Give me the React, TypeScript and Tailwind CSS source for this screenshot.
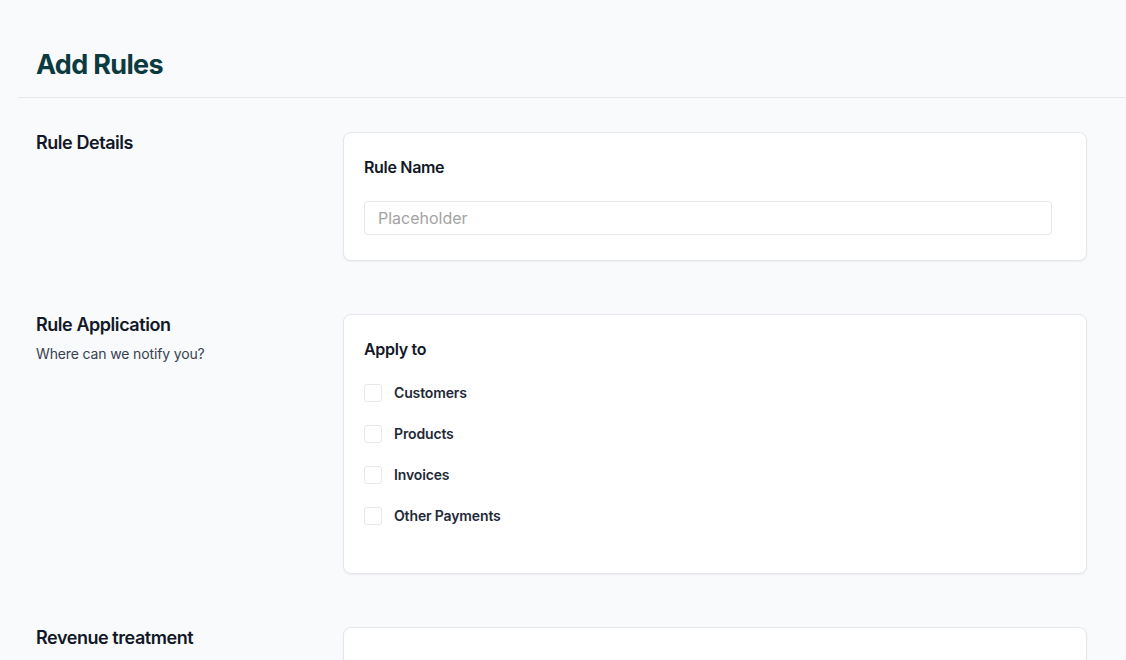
import React from 'react'

const font = { fontFamily: 'Inter, "Noto Sans", sans-serif' }

const targets = ['Customers', 'Products', 'Invoices', 'Other Payments']

function Section({ title, subtitle, children }: { title: string; subtitle?: string; children: React.ReactNode }) {
  return (
    <div className="flex">
      <div className="w-[307px] shrink-0">
        <h2 className="text-[18px] leading-[28px] font-semibold text-[#111827] tracking-[-0.025em]">{title}</h2>
        {subtitle && <p className="mt-[5px] text-[14px] leading-[20px] text-[#374151] tracking-[-0.01em]">{subtitle}</p>}
      </div>
      <div className="mt-[3px] w-[744px] shrink-0 rounded-[8px] border border-[#e5e7eb] bg-white shadow-[0_1px_2px_rgba(0,0,0,0.06)]">
        {children}
      </div>
    </div>
  )
}

export default function App() {
  return (
    <div className="min-h-screen bg-[#f9fafb] overflow-hidden" style={font}>
      <div className="ml-[18px]">
        {/* Header */}
        <header className="border-b border-[#e5e7eb] pl-[18px] pt-[47px] pb-[14px]">
          <h1 className="text-[27px] leading-[36px] font-bold text-[#0b3b40] tracking-[-0.025em]">Add Rules</h1>
        </header>

        <div className="pl-[18px] pt-[31px] flex flex-col gap-[50px]">
          <Section title="Rule Details">
            <div className="pt-[22px] px-[20px] pb-[25px]">
              <label className="block text-[16px] leading-[24px] font-semibold text-[#111827] tracking-[-0.02em]">Rule Name</label>
              <input
                type="text"
                placeholder="Placeholder"
                className="mt-[22px] block h-[34px] w-[688px] rounded-[4px] border border-[#e5e7eb] bg-white px-[13px] text-[16px] text-[#111827] placeholder:text-[#a3a3a3] outline-none"
              />
            </div>
          </Section>

          <Section title="Rule Application" subtitle="Where can we notify you?">
            <div className="pt-[22px] px-[20px] pb-[47px]">
              <div className="text-[16px] leading-[24px] font-semibold text-[#111827] tracking-[-0.02em]">Apply to</div>
              <div className="mt-[22px] flex flex-col gap-[21px]">
                {targets.map((t) => (
                  <label key={t} className="flex items-center gap-[12px] h-[20px]">
                    <span className="w-[18px] h-[18px] rounded-[3px] border border-[#e5e7eb] bg-white" />
                    <span className="text-[14px] leading-[20px] font-semibold text-[#1f2937] tracking-[-0.01em]">{t}</span>
                  </label>
                ))}
              </div>
            </div>
          </Section>

          <Section title="Revenue treatment">
            <div className="h-[200px]" />
          </Section>
        </div>
      </div>
    </div>
  )
}
